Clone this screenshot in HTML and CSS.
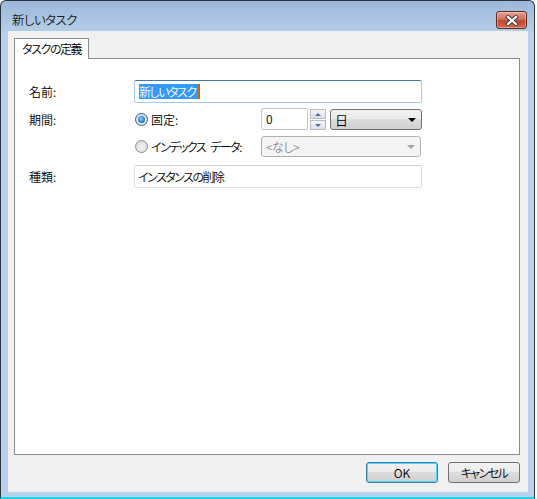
FILE: index.html
```html
<!DOCTYPE html>
<html lang="ja">
<head>
    <meta charset="UTF-8">
    <title>新しいタスク</title>
    <link rel="stylesheet" href="styles.css">
</head>
<body>

<div class="window">
    <!-- タイトルバー -->
    <div class="titlebar">
        <span class="title">新しいタスク</span>
        <button class="close-btn" aria-label="閉じる">
            <svg width="14" height="11" viewBox="0 0 14 11">
                <path d="M3 2 L11 9 M11 2 L3 9" stroke="#3b3b3b" stroke-width="4" stroke-linecap="square" fill="none"/>
                <path d="M3 2 L11 9 M11 2 L3 9" stroke="#ffffff" stroke-width="2.2" stroke-linecap="square" fill="none"/>
            </svg>
        </button>
    </div>

    <div class="client">
        <div class="tabs">
            <div class="tab active">タスクの定義</div>
        </div>

        <div class="tab-panel">
            <div class="form-row row-name">
                <label class="field-label">名前:</label>
                <div class="text-input focused"><span class="selection kana">新しいタスク</span><span class="caret"></span></div>
            </div>

            <div class="form-row row-fixed">
                <label class="field-label">期間:</label>
                <div class="radio-option">
                    <span class="radio checked"></span>
                    <span>固定:</span>
                </div>
                <div class="number-input">0</div>
                <div class="spin">
                    <span class="spin-btn"><i class="arrow-up"></i></span>
                    <span class="spin-btn"><i class="arrow-down"></i></span>
                </div>
                <div class="combo">
                    <span>日</span>
                    <i class="combo-arrow"></i>
                </div>
            </div>

            <div class="form-row row-index">
                <label class="field-label"></label>
                <div class="radio-option">
                    <span class="radio"></span>
                    <span class="kana">インデックス</span><span class="kana word-gap">データ:</span>
                </div>
                <div class="combo disabled">
                    <span>&lt;なし&gt;</span>
                    <i class="combo-arrow"></i>
                </div>
            </div>

            <div class="form-row row-kind">
                <label class="field-label">種類:</label>
                <div class="text-input readonly"><span class="kana">インスタンスの削除</span></div>
            </div>
        </div>

        <div class="dialog-buttons">
            <button class="btn default">OK</button>
            <button class="btn"><span class="kana">キャンセル</span></button>
        </div>
    </div>
</div>

</body>
</html>
```

FILE: styles.css
```css
* { margin: 0; padding: 0; box-sizing: border-box; }

body {
    background: #ffffff;
    font-family: "Noto Sans CJK JP", "Noto Sans", sans-serif;
    font-size: 12px;
    font-weight: 350;
    font-feature-settings: "palt";
    color: #000000;
}

/* カナの多い文字列は Meiryo UI 風に詰める */
.kana { letter-spacing: -1.5px; }
.word-gap { margin-left: 2px; }

/* ウィンドウ枠 */
.window {
    width: 535px;
    height: 499px;
    border: 1px solid #2b3540;
    border-bottom: 2px solid #27d0e6;
    border-radius: 6px 6px 0 0;
    background: linear-gradient(#9cb8da, #b4cde8 30px, #b9d1ea 31px);
    display: flex;
    flex-direction: column;
}

.titlebar {
    height: 30px;
    display: flex;
    align-items: flex-start;
    justify-content: space-between;
    padding: 0 7px 0 11px;
}
.title {
    font-size: 12.5px;
    line-height: 38px;
    color: #1a1a1a;
    letter-spacing: -0.6px;
}
.close-btn {
    margin-top: 10px;
    width: 31px;
    height: 18px;
    border: 1px solid #5d2a22;
    border-radius: 3px;
    background: linear-gradient(#e4a18f, #d2705e 45%, #c0452f 55%, #d06a4c);
    box-shadow: inset 0 0 0 1px rgba(255,255,255,0.35);
    display: flex;
    align-items: center;
    justify-content: center;
}
.close-btn svg { display: block; }

.client {
    flex: 1;
    margin: 0 6px 5px 7px;
    background: #f0f0f0;
    padding: 7px 8px 0 6px;
    display: flex;
    flex-direction: column;
}

/* タブ */
.tabs { display: flex; height: 20px; }
.tab {
    width: 75px;
    height: 21px;
    border: 1px solid #898c95;
    border-bottom: none;
    background: #ffffff;
    padding-left: 7px;
    line-height: 19px;
    white-space: nowrap;
    letter-spacing: -1.4px;
    position: relative;
    z-index: 1;
}

.tab-panel {
    height: 397px;
    background: #ffffff;
    border: 1px solid #898c95;
    padding: 21px 0 0 14px;
}

.form-row { display: flex; align-items: center; white-space: nowrap; }
.field-label { width: 105px; flex-shrink: 0; }
.row-name { height: 23px; }
.row-fixed { height: 22px; margin-top: 5px; }
.row-index { height: 21px; margin-top: 6px; }
.row-kind { height: 23px; margin-top: 8px; }

.text-input {
    width: 288px;
    height: 23px;
    border: 1px solid #abadb3;
    border-radius: 2px;
    background: #ffffff;
    padding: 0 3px;
    line-height: 21px;
    display: flex;
    align-items: center;
}
.text-input.focused {
    border-color: #a4c9e3;
    border-top-color: #3d7bad;
    padding-left: 4px;
}
.text-input.readonly {
    border-color: #d9dee4;
    border-top-color: #c9d1da;
}
.selection {
    background: #3399ff;
    color: #ffffff;
    line-height: 15px;
    padding-right: 2px;
}
.caret {
    width: 2px;
    height: 15px;
    background: #cc6600;
}

/* ラジオボタン */
.radio-option {
    width: 127px;
    flex-shrink: 0;
    display: flex;
    align-items: center;
    gap: 3px;
    padding-left: 1px;
}
.radio {
    width: 13px;
    height: 13px;
    border-radius: 50%;
    border: 1px solid #8e8f8f;
    background: radial-gradient(circle at 50% 60%, #f4f4f4, #d4d4d4);
    position: relative;
}
.radio.checked { border-color: #2c628b; }
.radio.checked::after {
    content: "";
    position: absolute;
    left: 2px; top: 2px;
    width: 7px; height: 7px;
    border-radius: 50%;
    background: radial-gradient(circle at 45% 40%, #8fd0ff, #1f6bb5 70%, #0d3f80);
}

.number-input {
    width: 47px;
    height: 22px;
    border: 1px solid #c4c8cc;
    border-radius: 2px;
    background: #ffffff;
    padding-left: 4px;
    line-height: 20px;
    align-self: flex-start;
}

.spin {
    margin-left: 2px;
    width: 16px;
    display: flex;
    flex-direction: column;
    gap: 1px;
    align-self: flex-start;
    padding-top: 1px;
}
.spin-btn {
    height: 10px;
    border: 1px solid #b6bcc6;
    background: linear-gradient(#f6f6f6, #dcdfe4);
    display: flex;
    align-items: center;
    justify-content: center;
}
.arrow-up, .arrow-down {
    width: 0; height: 0;
    border-left: 3px solid transparent;
    border-right: 3px solid transparent;
}
.arrow-up { border-bottom: 3px solid #4a6fa5; }
.arrow-down { border-top: 3px solid #4a6fa5; }

/* コンボボックス */
.combo {
    margin-left: 4px;
    width: 92px;
    height: 21px;
    border: 1px solid #707070;
    border-radius: 3px;
    background: linear-gradient(#f2f2f2, #ebebeb 45%, #dddddd 50%, #cfcfcf);
    display: flex;
    align-items: center;
    justify-content: space-between;
    padding: 0 5px 0 4px;
    font-size: 13px;
    align-self: flex-end;
}
.combo-arrow {
    width: 0; height: 0;
    border-left: 4px solid transparent;
    border-right: 4px solid transparent;
    border-top: 4px solid #000000;
}
.combo.disabled {
    margin-left: 0;
    width: 160px;
    border-color: #adb2b5;
    background: #f4f4f4;
    color: #8d8d8d;
    font-size: 12px;
    letter-spacing: -0.5px;
}
.combo.disabled .combo-arrow { border-top-color: #a3a3a3; }

/* ダイアログボタン */
.dialog-buttons {
    display: flex;
    justify-content: flex-end;
    gap: 10px;
    margin-top: 7px;
}
.btn {
    width: 72px;
    height: 21px;
    border: 1px solid #707070;
    border-radius: 3px;
    background: linear-gradient(#f2f2f2, #ebebeb 45%, #dddddd 50%, #cfcfcf);
    font-family: inherit;
    font-size: 12px;
    font-weight: 350;
    font-feature-settings: "palt";
    color: #000000;
}
.btn.default {
    border-color: #3c7fb1;
    box-shadow: inset 0 0 0 1px #48d8fb;
}
```
